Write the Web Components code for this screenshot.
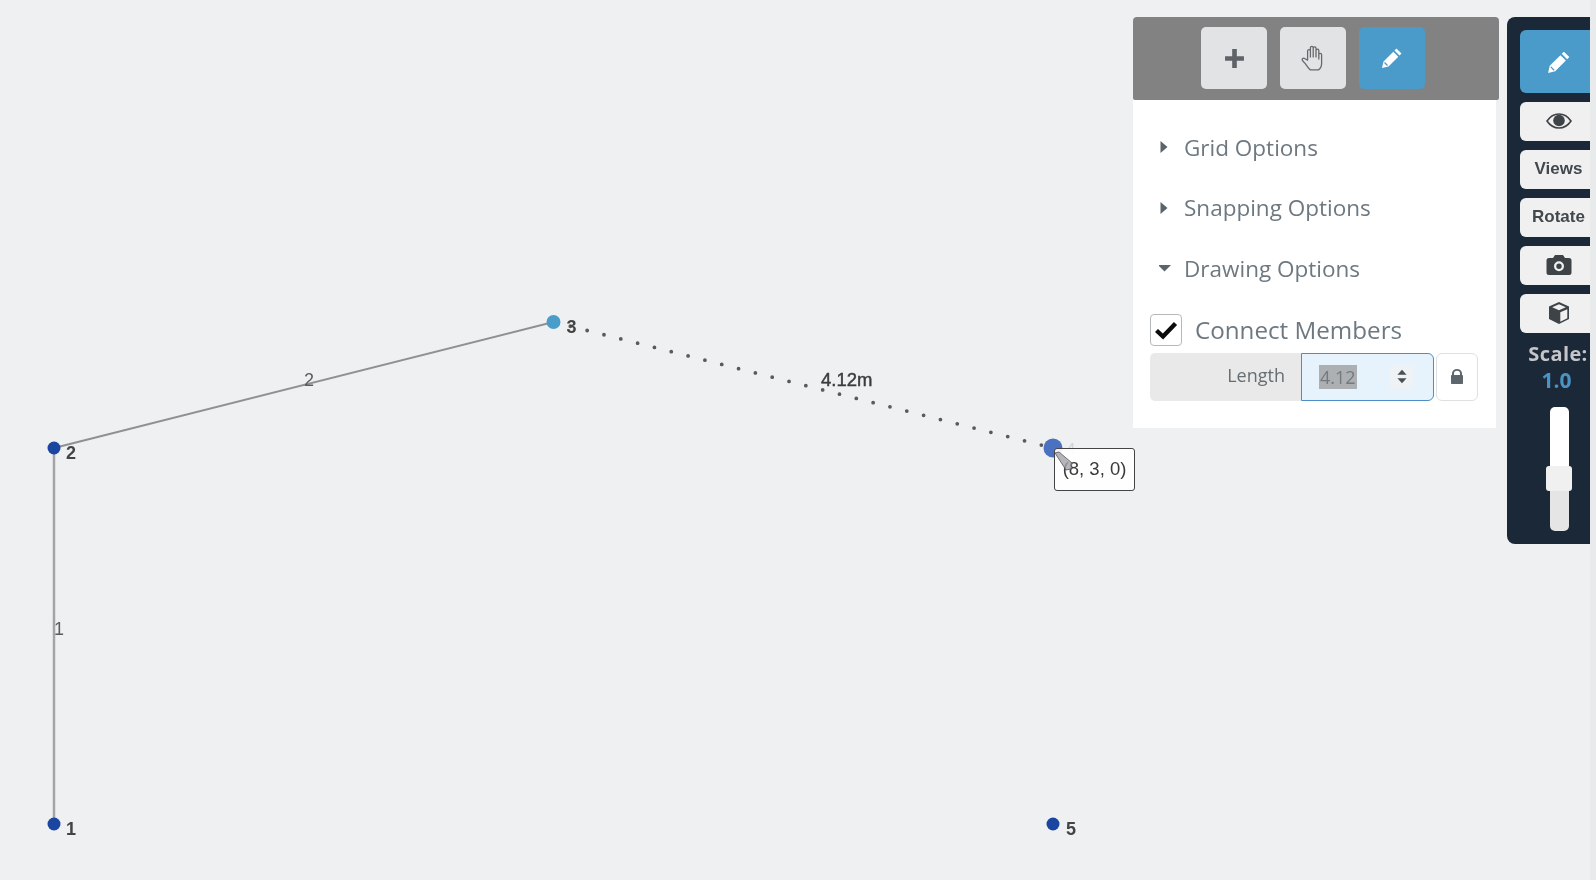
<!DOCTYPE html>
<html>
<head>
<meta charset="utf-8">
<title>Frame editor</title>
<style>
html,body{margin:0;height:100%;background:#eff0f2;overflow:hidden}
</style>
</head>
<body>
<frame-app>
  <graph-canvas slot="canvas"></graph-canvas>
  <draw-panel slot="tools">
    <head-button slot="head"><svg width="21" height="21" viewBox="0 0 20 20"><path d="M7.800 1h4.400v6.800H19v4.400h-6.800V19H7.800v-6.800H1V7.800h6.800z" fill="#5f6367"/></svg></head-button>
    <head-button slot="head"><svg width="26" height="28" viewBox="0 0 24 26" fill="none" stroke="#66696d" stroke-width="1.200" stroke-linejoin="round" stroke-linecap="round"><path d="M7 15V6.500a1.300 1.300 0 0 1 2.600 0V12M9.600 12V3.500a1.300 1.300 0 0 1 2.600 0V12M12.200 12V4a1.300 1.300 0 0 1 2.600 0v8M14.800 12V6a1.300 1.300 0 0 1 2.600 0v8M17.400 10a1.300 1.300 0 0 1 2.600 0v8c0 3-1.500 5-3 6H9.500c-1.500-1-3-3.500-4.500-5.500l-2.800-3.200c-.9-1.300.8-2.800 2-1.800L7 15"/></svg></head-button>
    <head-button slot="head" active><svg width="22" height="22" viewBox="0 0 22 22"><path d="M15.500 1.500l5 5-2 2-5-5zM12.300 4.700l5 5L7.500 19.500 1 21l1.500-6.500z" fill="#fff"/><path d="M3.500 15.500l3 3" stroke="#4b9bca" stroke-width="1.200"/></svg></head-button>
    <option-row>Grid Options</option-row>
    <option-row>Snapping Options</option-row>
    <option-row open>Drawing Options</option-row>
    <check-row>Connect Members</check-row>
    <length-field label="Length" value="4.12"></length-field>
  </draw-panel>
  <side-toolbar slot="tools">
    <side-button tall active><svg width="24" height="24" viewBox="0 0 22 22"><path d="M15.500 1.500l5 5-2 2-5-5zM12.300 4.700l5 5L7.500 19.500 1 21l1.500-6.500z" fill="#fff"/><path d="M3.500 15.500l3 3" stroke="#4b9bca" stroke-width="1.200"/></svg></side-button>
    <side-button><svg width="26" height="18" viewBox="0 0 26 18"><path d="M1 9c3-4.500 7-7 12-7s9 2.500 12 7c-3 4.500-7 7-12 7S4 13.500 1 9z" fill="none" stroke="#3e4347" stroke-width="1.600"/><circle cx="13" cy="8.500" r="5.800" fill="#3e4347"/></svg></side-button>
    <side-button>Views</side-button>
    <side-button>Rotate</side-button>
    <side-button><svg width="26" height="24" viewBox="0 0 26 22"><path fill-rule="evenodd" d="M9 1h8l2 3h4a2.500 2.500 0 0 1 2.500 2.500v12A2.500 2.500 0 0 1 23 21H3a2.500 2.500 0 0 1-2.500-2.500v-12A2.500 2.500 0 0 1 3 4h4zM13 7.200a5 5 0 1 0 0 10 5 5 0 0 0 0-10zm0 2.300a2.700 2.700 0 1 1 0 5.400 2.700 2.700 0 0 1 0-5.400z" fill="#3e4347"/></svg></side-button>
    <side-button><svg width="24" height="24" viewBox="0 0 24 24"><path d="M12 1l10 4.500v12.500L12 23 2 18V5.500z" fill="#3e4347"/><path d="M12 3.200l6.800 3-6.800 3-6.800-3zM13.300 11.200l7-3v9l-7 3.500z" fill="#f0f0f0"/></svg></side-button>
    <scale-slider value="1.0"></scale-slider>
  </side-toolbar>
</frame-app>

<script>
class FrameApp extends HTMLElement {
  constructor() {
    super();
    this.attachShadow({ mode: "open" }).innerHTML = `
<style>
:host{display:block;position:relative;width:1596px;height:880px;background:#eff0f2;overflow:hidden;filter:blur(.65px)}
.tools{display:flex;justify-content:flex-end;align-items:flex-start;gap:8px;padding:17px 6px 0 0;position:relative;pointer-events:none}
.strip{position:absolute;right:0;top:0;bottom:0;width:6px;background:#e9eaec}
</style>
<slot name="canvas"></slot>
<div class="tools"><slot name="tools"></slot></div>
<div class="strip"></div>`;
  }
}

class GraphCanvas extends HTMLElement {
  constructor() {
    super();
    this.attachShadow({ mode: "open" });
  }
  connectedCallback() {
    var nodes = [
      { n: 1, x: 54, y: 824, c: "#1a45a0", r: 6.5, dx: 12 },
      { n: 2, x: 54, y: 448, c: "#1a45a0", r: 6.5, dx: 12 },
      { n: 3, x: 553.5, y: 322, c: "#4a9dc9", r: 7, dx: 13 },
      { n: 5, x: 1053, y: 824, c: "#1a45a0", r: 6.5, dx: 13 }
    ];
    var dots = nodes.map(p => `<circle cx="${p.x}" cy="${p.y}" r="${p.r}" fill="${p.c}"/>
      <text class="node" x="${p.x + p.dx}" y="${p.y + 11}">${p.n}</text>`).join("");
    this.shadowRoot.innerHTML = `
<style>
:host{display:block;position:absolute;left:0;top:0;width:1596px;height:880px}
svg{display:block}
text{font-family:"Liberation Sans",sans-serif}
.node{font-size:18px;font-weight:bold;fill:#444}
.edge{font-size:18px;fill:#5c5c5c}
.len{font-size:18.500px;fill:#3c3c3c;stroke:#3c3c3c;stroke-width:.45px}
.tip{position:absolute;left:1054px;top:448px;width:81px;height:43px;box-sizing:border-box;border:1.5px solid #444;border-radius:3px;background:rgba(255,255,255,.92);
  font:18.500px/40px "Liberation Sans",sans-serif;color:#3a3a3a;text-align:center}
.cursor{position:absolute;left:0;top:0}
</style>
<svg width="1596" height="880">
  <line x1="54" y1="824" x2="54" y2="448" stroke="#a3a4a6" stroke-width="2.500"/>
  <line x1="54" y1="448" x2="553.5" y2="322" stroke="#8f9092" stroke-width="2"/>
  <line x1="553.5" y1="322" x2="1053" y2="448" stroke="#5a5a5a" stroke-width="3.800" stroke-linecap="round" stroke-dasharray="0 17.35"/>
  <text class="edge" x="54" y="635">1</text>
  <text class="edge" x="304" y="386">2</text>
  <text class="len" x="821" y="386">4.12m</text>
  ${dots}
  <circle cx="1053" cy="448" r="9.500" fill="#4a72c0"/>
  <text x="1066" y="455" font-size="17" fill="#d3d4d6">4</text>
</svg>
<div class="tip">(8, 3, 0)</div>
<svg class="cursor" width="1596" height="880"><path d="M1055 453l4-1 13 11-1 6-5 1z" fill="#a2a4a7" fill-opacity=".8" stroke="#555" stroke-width=".8"/></svg>`;
  }
}

class DrawPanel extends HTMLElement {
  constructor() {
    super();
    this.attachShadow({ mode: "open" }).innerHTML = `
<style>
:host{display:block;width:366px;pointer-events:auto;font-family:"Open Sans",sans-serif}
.head{height:83px;box-sizing:border-box;background:#828282;border-radius:4px 4px 2px 2px;display:flex;justify-content:flex-start;gap:13px;padding:10px 0 0 68px}
.body{width:363px;height:328px;box-sizing:border-box;background:#fff;padding:17px 18px 0 17px;display:flex;flex-direction:column}
</style>
<div class="head"><slot name="head"></slot></div>
<div class="body"><slot></slot></div>`;
  }
}

class HeadButton extends HTMLElement {
  constructor() {
    super();
    this.attachShadow({ mode: "open" }).innerHTML = `
<style>
:host{display:flex;align-items:center;justify-content:center;width:66px;height:62px;background:#e2e3e4;border-radius:5px}
:host([active]){background:#4a9aca}
</style>
<slot></slot>`;
  }
}

class OptionRow extends HTMLElement {
  constructor() {
    super();
    var open = this.hasAttribute("open");
    this.attachShadow({ mode: "open" }).innerHTML = `
<style>
:host{display:flex;align-items:center;height:60.5px;font-size:22.500px;color:#6d7880}
svg{margin-left:9px;width:12px;margin-right:13px}
</style>
<svg height="14" viewBox="0 0 12 14">${open
        ? '<path d="M-1 4h13L5.500 10.500z" fill="#5a646c"/>'
        : '<path d="M1.500 1L8.500 7l-7 6z" fill="#5a646c"/>'}</svg><slot></slot>`;
  }
}

class CheckRow extends HTMLElement {
  constructor() {
    super();
    this.attachShadow({ mode: "open" }).innerHTML = `
<style>
:host{display:flex;align-items:center;gap:13px;height:32px;margin-top:15px;font-size:24.200px;color:#6d7880}
.box{width:32px;height:32px;box-sizing:border-box;border:1.500px solid #b6b9bb;border-radius:4px;background:#fff;display:flex;align-items:center;justify-content:center}
</style>
<div class="box"><svg width="24" height="20" viewBox="0 0 24 20"><path d="M2.500 10.500l6.500 6L21.500 3.500" fill="none" stroke="#0c0c0c" stroke-width="4.400"/></svg></div>
<slot></slot>`;
  }
}

class LengthField extends HTMLElement {
  constructor() {
    super();
    this.attachShadow({ mode: "open" });
  }
  connectedCallback() {
    this.shadowRoot.innerHTML = `
<style>
:host{display:flex;height:48px;margin-top:7px}
.label{width:151px;box-sizing:border-box;background:#e9e9e9;border-radius:5px 0 0 5px;padding-right:16px;text-align:right;font-size:18px;line-height:45px;color:#666e74}
.input{width:133px;box-sizing:border-box;background:#e6f3fc;border:1.500px solid #4b8fc6;border-radius:0 6px 6px 0;display:flex;align-items:center;padding-left:17px;position:relative}
.val{background:#acb0b3;color:#74797d;font-size:18px;line-height:24px;padding:0 1px}
.spin{margin-left:auto;margin-right:19px;width:24px;height:24px;background:#eef2f5;display:flex;align-items:center;justify-content:center}
.lock{width:42px;box-sizing:border-box;margin-left:2px;border:1px solid #dfe0e1;border-radius:6px;background:#fff;display:flex;align-items:center;justify-content:center}
</style>
<div class="label">${this.getAttribute("label")}</div>
<div class="input"><span class="val">${this.getAttribute("value")}</span>
  <div class="spin"><svg width="10" height="15" viewBox="0 0 12 16"><path d="M6 0l5.500 6H.5zM6 16L.5 10h11z" fill="#4b4f53"/></svg></div></div>
<div class="lock"><svg width="12" height="15" viewBox="0 0 12 15"><path fill-rule="evenodd" d="M1 6V4.500a5 4.500 0 0 1 10 0V6h.2c.5 0 .8.400.8.800v7.400c0 .4-.3.800-.8.800H.8c-.5 0-.8-.4-.8-.8V6.800C0 6.400.3 6 .8 6zM3 6h6V4.500a3 2.700 0 0 0-6 0z" fill="#5d666d"/></svg></div>`;
  }
}

class SideToolbar extends HTMLElement {
  constructor() {
    super();
    this.attachShadow({ mode: "open" }).innerHTML = `
<style>
:host{display:flex;flex-direction:column;gap:9px;width:83px;height:527px;box-sizing:border-box;padding:13px 0 0 13px;background:#1b2838;border-radius:8px 0 0 8px;pointer-events:auto;overflow:hidden}
</style>
<slot></slot>`;
  }
}

class SideButton extends HTMLElement {
  constructor() {
    super();
    this.attachShadow({ mode: "open" }).innerHTML = `
<style>
:host{display:flex;align-items:center;justify-content:center;height:38px;padding-bottom:1px;width:77px;flex:none;background:#f0f0f0;border-radius:6px 0 0 6px;
  font:bold 17px "Liberation Sans",sans-serif;color:#43484c;white-space:nowrap}
:host([tall]){height:63px;padding-bottom:0;background:#4a9aca}
</style>
<slot></slot>`;
  }
}

class ScaleSlider extends HTMLElement {
  constructor() {
    super();
    this.attachShadow({ mode: "open" });
  }
  connectedCallback() {
    this.shadowRoot.innerHTML = `
<style>
:host{display:block;width:70px;margin-top:-1px;text-align:center;font:bold 20px/26px "Open Sans",sans-serif;letter-spacing:.4px;color:#c4c6c8;white-space:nowrap}
.label{margin-left:6px}
.num{color:#4a93c4;font-size:21px;line-height:26px;margin-left:3px;letter-spacing:0}
.track{position:relative;width:19px;height:124px;margin:14px 0 0 30px;background:linear-gradient(#fff 0 60%,#e5e5e5 60%);border-radius:5px}
.thumb{position:absolute;left:-4px;top:59px;width:26px;height:25px;background:#f0f0f0;border-radius:3px}
</style>
<div class="label">Scale:</div>
<div class="num">${this.getAttribute("value")}</div>
<div class="track"><div class="thumb"></div></div>`;
  }
}

customElements.define("frame-app", FrameApp);
customElements.define("graph-canvas", GraphCanvas);
customElements.define("draw-panel", DrawPanel);
customElements.define("head-button", HeadButton);
customElements.define("option-row", OptionRow);
customElements.define("check-row", CheckRow);
customElements.define("length-field", LengthField);
customElements.define("side-toolbar", SideToolbar);
customElements.define("side-button", SideButton);
customElements.define("scale-slider", ScaleSlider);
</script>
</body>
</html>
